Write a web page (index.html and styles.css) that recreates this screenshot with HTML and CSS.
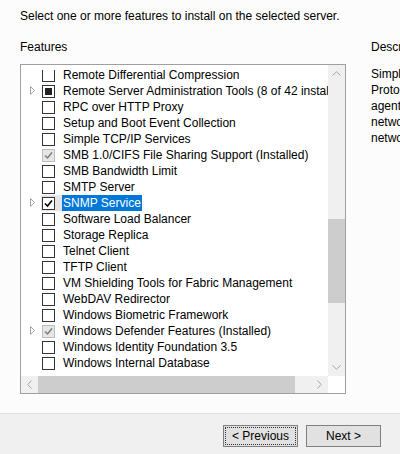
FILE: index.html
```html
<!DOCTYPE html>
<html lang="en">
<head>
<meta charset="utf-8">
<title>Select features</title>
<link rel="stylesheet" href="styles.css">
</head>
<body>
<div class="page">
  <div class="content">
    <p class="intro">Select one or more features to install on the selected server.</p>
    <div class="columns">
      <div class="left">
        <div class="heading">Features</div>
        <div class="listbox">
          <div class="viewport">
            <div class="clip">
              <ul class="rows">
                <li class="row"><span class="exp"></span><span class="cell"><span class="chk"></span></span><span class="label">Remote Differential Compression</span></li>
                <li class="row"><span class="exp"><svg width="6" height="9" viewBox="0 0 6 9"><path d="M0.5 0.5 L4.5 4.5 L0.5 8.5 Z" fill="none" stroke="#a6a6a6"/></svg></span><span class="cell"><span class="chk ind"></span></span><span class="label">Remote Server Administration Tools (8 of 42 installed)</span></li>
                <li class="row"><span class="exp"></span><span class="cell"><span class="chk"></span></span><span class="label">RPC over HTTP Proxy</span></li>
                <li class="row"><span class="exp"></span><span class="cell"><span class="chk"></span></span><span class="label">Setup and Boot Event Collection</span></li>
                <li class="row"><span class="exp"></span><span class="cell"><span class="chk"></span></span><span class="label">Simple TCP/IP Services</span></li>
                <li class="row"><span class="exp"></span><span class="cell"><span class="chk dis"><svg width="11" height="11" viewBox="0 0 11 11"><path d="M2 5.5 L4.5 8 L9 2.5" fill="none" stroke="#7d7d7d" stroke-width="1.5"/></svg></span></span><span class="label">SMB 1.0/CIFS File Sharing Support (Installed)</span></li>
                <li class="row"><span class="exp"></span><span class="cell"><span class="chk"></span></span><span class="label">SMB Bandwidth Limit</span></li>
                <li class="row"><span class="exp"></span><span class="cell"><span class="chk"></span></span><span class="label">SMTP Server</span></li>
                <li class="row"><span class="exp"><svg width="6" height="9" viewBox="0 0 6 9"><path d="M0.5 0.5 L4.5 4.5 L0.5 8.5 Z" fill="none" stroke="#a6a6a6"/></svg></span><span class="cell hot"><span class="chk"><svg width="11" height="11" viewBox="0 0 11 11"><path d="M2 5.5 L4.5 8 L9 2.5" fill="none" stroke="#000" stroke-width="1.6"/></svg></span></span><span class="label sel">SNMP Service</span></li>
                <li class="row"><span class="exp"></span><span class="cell"><span class="chk"></span></span><span class="label">Software Load Balancer</span></li>
                <li class="row"><span class="exp"></span><span class="cell"><span class="chk"></span></span><span class="label">Storage Replica</span></li>
                <li class="row"><span class="exp"></span><span class="cell"><span class="chk"></span></span><span class="label">Telnet Client</span></li>
                <li class="row"><span class="exp"></span><span class="cell"><span class="chk"></span></span><span class="label">TFTP Client</span></li>
                <li class="row"><span class="exp"></span><span class="cell"><span class="chk"></span></span><span class="label">VM Shielding Tools for Fabric Management</span></li>
                <li class="row"><span class="exp"></span><span class="cell"><span class="chk"></span></span><span class="label">WebDAV Redirector</span></li>
                <li class="row"><span class="exp"></span><span class="cell"><span class="chk"></span></span><span class="label">Windows Biometric Framework</span></li>
                <li class="row"><span class="exp"><svg width="6" height="9" viewBox="0 0 6 9"><path d="M0.5 0.5 L4.5 4.5 L0.5 8.5 Z" fill="none" stroke="#a6a6a6"/></svg></span><span class="cell"><span class="chk dis"><svg width="11" height="11" viewBox="0 0 11 11"><path d="M2 5.5 L4.5 8 L9 2.5" fill="none" stroke="#7d7d7d" stroke-width="1.5"/></svg></span></span><span class="label">Windows Defender Features (Installed)</span></li>
                <li class="row"><span class="exp"></span><span class="cell"><span class="chk"></span></span><span class="label">Windows Identity Foundation 3.5</span></li>
                <li class="row"><span class="exp"></span><span class="cell"><span class="chk"></span></span><span class="label">Windows Internal Database</span></li>
              </ul>
            </div>
          </div>
          <div class="vscroll">
            <span class="sbtn"><svg width="9" height="5" viewBox="0 0 9 5"><path d="M0.5 4.5 L4.5 0.8 L8.5 4.5" fill="none" stroke="#a3a3a3"/></svg></span>
            <div class="vtrack"><div class="vthumb"></div></div>
            <span class="sbtn"><svg width="9" height="5" viewBox="0 0 9 5"><path d="M0.5 0.5 L4.5 4.2 L8.5 0.5" fill="none" stroke="#a3a3a3"/></svg></span>
          </div>
          <div class="hscroll">
            <span class="sbtn"><svg width="5" height="9" viewBox="0 0 5 9"><path d="M4.5 0.5 L0.8 4.5 L4.5 8.5" fill="none" stroke="#a3a3a3"/></svg></span>
            <div class="htrack"><div class="hthumb"></div></div>
            <span class="sbtn"><svg width="5" height="9" viewBox="0 0 5 9"><path d="M0.5 0.5 L4.2 4.5 L0.5 8.5" fill="none" stroke="#a3a3a3"/></svg></span>
          </div>
          <div class="corner"></div>
        </div>
      </div>
      <div class="right">
        <div class="heading">Description</div>
        <p class="desc">Simple Network Management<br>Protocol (SNMP) Service includes<br>agents that monitor the activity in<br>network devices and report to the<br>network console workstation.</p>
      </div>
    </div>
  </div>
  <div class="footer">
    <button class="btn focus" type="button"><span class="btn-in">&lt; Previous</span></button>
    <button class="btn" type="button"><span class="btn-in">Next &gt;</span></button>
  </div>
</div>
</body>
</html>
```
FILE: styles.css
```css
html, body {
  margin: 0;
  padding: 0;
}
body {
  font-family: "Liberation Sans", Arial, sans-serif;
  font-size: 12px;
  line-height: 16px;
  color: #000;
  background: #fcfcfc;
}
.page {
  width: 400px;
  height: 454px;
  overflow: hidden;
  display: flex;
  flex-direction: column;
}
.content {
  height: 413px;
  background: #fcfcfc;
  padding: 8px 0 0 20px;
  box-sizing: border-box;
  overflow: hidden;
}
.intro {
  margin: 0;
  white-space: nowrap;
}
.columns {
  display: flex;
  margin-top: 15px;
}
.left {
  width: 326px;
  flex: none;
}
.heading {
  white-space: nowrap;
  height: 16px;
}
.listbox {
  margin-top: 9px;
  width: 326px;
  height: 330px;
  box-sizing: border-box;
  border: 1px solid #a0a0a0;
  display: grid;
  grid-template-columns: 307px 17px;
  grid-template-rows: 311px 17px;
  background: #fff;
}
.viewport {
  padding-top: 5px;
  background: #fff;
  box-sizing: border-box;
  height: 311px;
}
.clip {
  height: 306px;
  overflow: hidden;
}
.rows {
  list-style: none;
  margin: -3px 0 0 0;
  padding: 0;
}
.row {
  display: flex;
  height: 16px;
  white-space: nowrap;
}
.exp {
  width: 20px;
  flex: none;
  box-sizing: border-box;
  padding: 3px 0 0 9px;
  line-height: 0;
}
.cell {
  width: 21px;
  flex: none;
  box-sizing: border-box;
  padding: 2px 0 0 1px;
  line-height: 0;
}
.cell.hot {
  background: #e5e5e5;
  height: 16px;
}
.chk {
  display: block;
  width: 13px;
  height: 13px;
  box-sizing: border-box;
  border: 1px solid #333;
  background: #fff;
}
.chk.ind {
  padding: 2px;
}
.chk.ind::before {
  content: "";
  display: block;
  width: 7px;
  height: 7px;
  background: #222;
}
.chk.dis {
  border-color: #bcbcbc;
  background: #e6e6e6;
}
.label {
  padding: 0 1px;
  height: 16px;
}
.label.sel {
  background: #0078d7;
  color: #fff;
}
.vscroll {
  background: #f0f0f0;
  display: flex;
  flex-direction: column;
}
.sbtn {
  width: 17px;
  height: 17px;
  flex: none;
  display: flex;
  align-items: center;
  justify-content: center;
}
.vtrack {
  flex: 1;
}
.vthumb {
  margin-top: 137px;
  height: 84px;
  background: #cdcdcd;
}
.hscroll {
  background: #f0f0f0;
  display: flex;
}
.htrack {
  flex: 1;
}
.hthumb {
  width: 257px;
  height: 17px;
  background: #cdcdcd;
}
.corner {
  background: #fff;
}
.right {
  margin-left: 25px;
  flex: 1;
  overflow: hidden;
  min-width: 0;
}
.desc {
  margin: 11px 0 0 0;
  white-space: nowrap;
}
.footer {
  height: 41px;
  box-sizing: border-box;
  border-top: 1px solid #dfdfdf;
  background: #f0f0f0;
  display: flex;
  justify-content: flex-end;
  align-items: flex-start;
  gap: 8px;
  padding: 11px 19px 0 0;
}
.btn {
  width: 75px;
  height: 22px;
  box-sizing: border-box;
  border: 1px solid #7f7f7f;
  background: #e1e1e1;
  font-family: inherit;
  font-size: 12px;
  line-height: 16px;
  color: #000;
  padding: 1px;
  margin: 0;
  display: flex;
}
.btn-in {
  flex: 1;
  display: flex;
  align-items: center;
  justify-content: center;
  border: 1px dotted transparent;
}
.btn.focus .btn-in {
  border-color: #333;
}
```
